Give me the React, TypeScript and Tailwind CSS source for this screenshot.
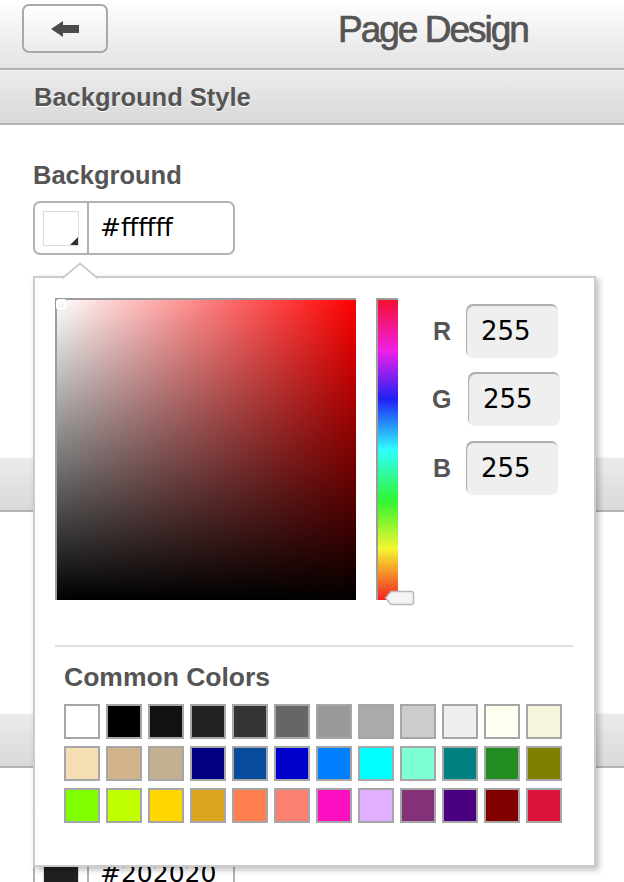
import React from "react";

const COMMON = [
  ["#ffffff", "#000000", "#111111", "#222222", "#333333", "#666666", "#999999", "#aaaaaa", "#cccccc", "#eeeeee", "#fffff0", "#f5f5dc"],
  ["#f5deb3", "#d2b48c", "#c3b091", "#000080", "#084c9e", "#0000cd", "#007fff", "#00ffff", "#7fffd4", "#008080", "#228b22", "#808000"],
  ["#7fff00", "#bfff00", "#ffd700", "#daa520", "#ff7f50", "#fa8072", "#fc0fc0", "#e0b0ff", "#843179", "#4b0082", "#800000", "#dc143c"],
];

const sans = "font-['Liberation_Sans',Arial,sans-serif]";
const mono = "font-['DejaVu_Sans',sans-serif]";

function SectionBar({ title }: { title: string }) {
  return (
    <div className="flex h-[55px] items-center border-t border-t-[#f6f6f6] border-b-2 border-b-[#b4b4b4] bg-gradient-to-b from-[#ebebeb] to-[#d9d9d9] px-[34px]">
      <span className={`${sans} text-[25.5px] leading-[25px] font-bold text-[#555] [text-shadow:0_1px_0_#fff]`}>{title}</span>
    </div>
  );
}

function ColorInput({ color, value }: { color: string; value: string }) {
  return (
    <div className="flex h-[54px] w-[202px] items-stretch rounded-[7px] border-2 border-[#b3b3b3] bg-white">
      <div className="flex w-[54px] items-center justify-center border-r-2 border-[#b3b3b3]">
        <div className="relative h-[35px] w-[36px] border border-[#dcdcdc]" style={{ backgroundColor: color }}>
          <svg className="absolute right-0 bottom-0" width="8" height="8" viewBox="0 0 8 8">
            <path d="M8 0 L8 8 L0 8 Z" fill="#333" />
          </svg>
        </div>
      </div>
      <div className={`${mono} flex items-center pl-[11px] text-[25px] text-black`}>{value}</div>
    </div>
  );
}

function RgbRow({ label, value, inputMl, labelPl }: { label: string; value: string; inputMl: string; labelPl: string }) {
  return (
    <div className="flex items-center">
      <span className={`${sans} ${labelPl} w-[34px] text-[25px] leading-[25px] font-bold text-[#555]`}>{label}</span>
      <div
        className={`${mono} ${inputMl} flex h-[54px] w-[92px] items-center rounded-[7px] bg-[#efefef] pl-[15px] text-[26px] text-black shadow-[inset_1px_2px_1px_rgba(0,0,0,0.28)]`}
      >
        {value}
      </div>
    </div>
  );
}

function Picker() {
  return (
    <div className="absolute top-[276px] left-[33px] h-[591px] w-[563px] border-2 border-[#cbcbcb] bg-white pt-[20px] pl-[20px] pr-[20px] shadow-[3px_3px_6px_rgba(0,0,0,0.25)]">
      <svg className="absolute -top-[16px] left-[27px]" width="36" height="17" viewBox="0 0 36 17">
        <path d="M0 16.5 L18 1.5 L36 16.5" fill="#fff" stroke="#cbcbcb" strokeWidth="2" />
      </svg>
      <div className="flex">
        <div className="relative h-[302px] w-[301px] border-t-2 border-l-2 border-[#9c9c9c] bg-[#ff0000]">
          <div className="absolute inset-0 bg-gradient-to-r from-white to-transparent" />
          <div className="absolute inset-0 bg-gradient-to-b from-transparent to-black" />
          <div className="absolute -top-[1px] -left-[1px] h-[11px] w-[11px] rounded-[3px] border-2 border-white shadow-[0_0_1px_rgba(0,0,0,0.3)]" />
        </div>
        <div className="relative ml-[20px] h-[302px] w-[22px] border-t-2 border-l-2 border-[#9c9c9c] bg-[linear-gradient(to_bottom,#f51030_0%,#f020e8_17%,#2020f5_33%,#30ffff_50%,#30f530_67%,#f5f530_83%,#f52020_100%)]">
          <svg className="absolute -right-[17px] -bottom-[6px]" width="31" height="16" viewBox="0 0 31 16">
            <path d="M1.5 8 L7 1.5 H27.5 Q29.5 1.5 29.5 3.5 V12.5 Q29.5 14.5 27.5 14.5 H7 Z" fill="#f4f4f4" stroke="#b8b8b8" strokeWidth="1.5" />
          </svg>
        </div>
        <div className="mt-[6px] ml-[34px] flex flex-col">
          <RgbRow label="R" value="255" inputMl="ml-0" labelPl="pl-px" />
          <div className="mt-[14px]">
            <RgbRow label="G" value="255" inputMl="ml-[2px]" labelPl="pl-0" />
          </div>
          <div className="mt-[15px]">
            <RgbRow label="B" value="255" inputMl="ml-0" labelPl="pl-px" />
          </div>
        </div>
      </div>
      <div className="mt-[45px] h-[2px] w-[518px] bg-[#dedede]" />
      <div className={`${sans} mt-[18px] pl-[9px] text-[26.5px] leading-[25px] font-bold text-[#555]`}>Common Colors</div>
      <div className="mt-[14px] grid w-fit grid-cols-12 gap-x-[6px] gap-y-[7px] pl-[9px]">
        {COMMON.flat().map((c, i) => (
          <div key={i} className="h-[35px] w-[36px] border-2 border-[#a6a6a6]" style={{ backgroundColor: c }} />
        ))}
      </div>
    </div>
  );
}

export default function App() {
  return (
    <div className="relative h-[882px] w-full overflow-hidden bg-white">
      <header className="flex h-[70px] items-start border-b-2 border-[#b0b0b0] bg-gradient-to-b from-white to-[#e3e3e3]">
        <button className="mt-[4px] ml-[22px] flex h-[49px] w-[86px] items-center justify-center rounded-[7px] border-2 border-[#a9a9a9] bg-gradient-to-b from-white to-[#ececec]">
          <svg width="28" height="16" viewBox="0 0 28 16">
            <path d="M0 8 L12 0 V4 H28 V12 H12 V16 Z" fill="#4a4a4a" />
          </svg>
        </button>
        <h1
          className={`${sans} mt-[11px] ml-[230px] text-[37px] leading-[37px] font-normal tracking-[-2px] text-[#555] [-webkit-text-stroke:0.7px_#555]`}
        >
          Page Design
        </h1>
      </header>

      <SectionBar title="Background Style" />
      <section className="h-[332px] px-[33px] pt-[38px]">
        <div className={`${sans} text-[25.5px] leading-[25px] font-bold text-[#555]`}>Background</div>
        <div className="mt-[13px]">
          <ColorInput color="#ffffff" value="#ffffff" />
        </div>
      </section>

      <SectionBar title="Header Style" />
      <section className="h-[201px] px-[33px] pt-[38px]">
        <div className={`${sans} text-[25.5px] leading-[25px] font-bold text-[#555]`}>Header</div>
      </section>

      <SectionBar title="Text Style" />
      <section className="px-[33px] pt-[41px]">
        <div className={`${sans} text-[25.5px] leading-[25px] font-bold text-[#555]`}>Text Color</div>
        <div className="mt-[13px]">
          <ColorInput color="#202020" value="#202020" />
        </div>
      </section>

      <Picker />
    </div>
  );
}
